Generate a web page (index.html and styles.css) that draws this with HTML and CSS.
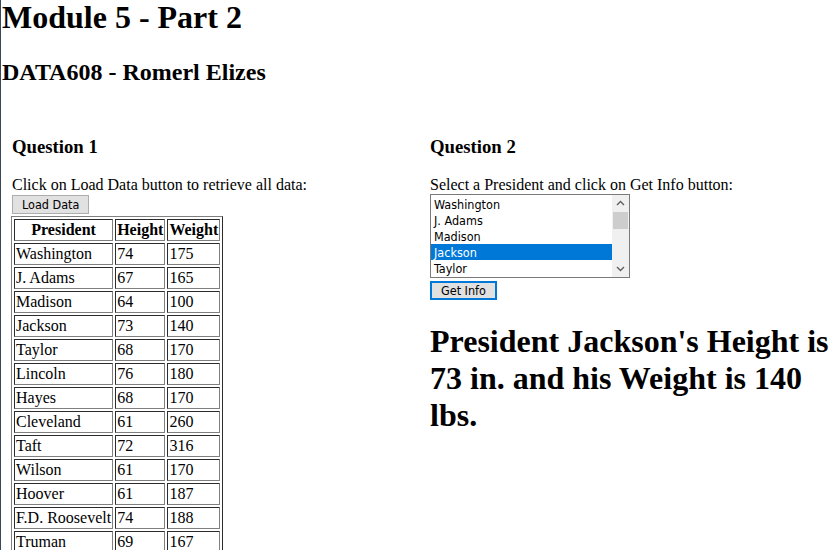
FILE: index.html
```html
<!DOCTYPE html>
<html lang="en">
<head>
<meta charset="utf-8">
<title>Module 5 - Part 2</title>
<link rel="stylesheet" href="styles.css">
</head>
<body>
<header class="page-header">
  <h1 class="title">Module 5 - Part 2</h1>
  <h2 class="subtitle">DATA608 - Romerl Elizes</h2>
</header>
<main class="row">
  <section class="col col-left">
    <h3 class="q-title">Question 1</h3>
    <div class="prompt">Click on Load Data button to retrieve all data:</div>
    <button class="btn">Load Data</button>
    <table class="data">
      <thead>
        <tr><th>President</th><th>Height</th><th>Weight</th></tr>
      </thead>
      <tbody>
        <tr><td>Washington</td><td>74</td><td>175</td></tr>
        <tr><td>J. Adams</td><td>67</td><td>165</td></tr>
        <tr><td>Madison</td><td>64</td><td>100</td></tr>
        <tr><td>Jackson</td><td>73</td><td>140</td></tr>
        <tr><td>Taylor</td><td>68</td><td>170</td></tr>
        <tr><td>Lincoln</td><td>76</td><td>180</td></tr>
        <tr><td>Hayes</td><td>68</td><td>170</td></tr>
        <tr><td>Cleveland</td><td>61</td><td>260</td></tr>
        <tr><td>Taft</td><td>72</td><td>316</td></tr>
        <tr><td>Wilson</td><td>61</td><td>170</td></tr>
        <tr><td>Hoover</td><td>61</td><td>187</td></tr>
        <tr><td>F.D. Roosevelt</td><td>74</td><td>188</td></tr>
        <tr><td>Truman</td><td>69</td><td>167</td></tr>
      </tbody>
    </table>
  </section>
  <section class="col col-right">
    <h3 class="q-title">Question 2</h3>
    <div class="prompt">Select a President and click on Get Info button:</div>
    <div class="listbox" role="listbox">
      <ul class="options">
        <li class="option">Washington</li>
        <li class="option">J. Adams</li>
        <li class="option">Madison</li>
        <li class="option selected">Jackson</li>
        <li class="option">Taylor</li>
      </ul>
      <div class="scrollbar">
        <span class="arrow"><svg width="17" height="17" viewBox="0 0 17 17"><path d="M5 10 L8.5 6.5 L12 10" fill="none" stroke="#606060" stroke-width="1.4"/></svg></span>
        <span class="track"><span class="thumb"></span></span>
        <span class="arrow"><svg width="17" height="17" viewBox="0 0 17 17"><path d="M5 7 L8.5 10.5 L12 7" fill="none" stroke="#606060" stroke-width="1.4"/></svg></span>
      </div>
    </div>
    <button class="btn btn-focused">Get Info</button>
    <h1 class="result">President Jackson's Height is 73 in. and his Weight is 140 lbs.</h1>
  </section>
</main>
</body>
</html>
```
FILE: styles.css
```css
html {
  overflow: hidden;
  background: #fff;
}

body {
  margin: 0;
  font-family: "Liberation Serif", "Times New Roman", serif;
  font-size: 16px;
  color: #000;
  box-shadow: inset 1px 0 0 #3a4858;
  min-height: 550px;
}

.page-header {
  padding-left: 2px;
}

.title {
  margin: -1px 0 0;
  font-size: 32px;
  line-height: 37px;
  font-weight: 700;
}

.subtitle {
  margin: 22px 0 0;
  font-size: 24px;
  line-height: 28px;
  font-weight: 700;
}

.row {
  display: grid;
  grid-template-columns: 418px 1fr;
  margin-top: 50px;
}

.col {
  min-width: 0;
}

.col-left {
  padding-left: 11px;
}

.col-right {
  padding-left: 12px;
}

.q-title {
  margin: 0 0 0 1px;
  font-size: 18.72px;
  line-height: 22px;
  font-weight: 700;
}

.col-right .q-title {
  margin-left: 0;
}

.prompt {
  margin-top: 18px;
  line-height: 18px;
}

.col-left .prompt {
  padding-left: 1px;
}

.btn {
  display: block;
  margin: 1px 0 0 1px;
  height: 19px;
  padding: 0 9px;
  border: 1px solid #adadad;
  background: #e1e1e1;
  font-family: "DejaVu Sans Condensed", "DejaVu Sans", Tahoma, sans-serif;
  font-stretch: condensed;
  font-size: 12.5px;
  line-height: 17px;
  color: #000;
}

.btn-focused {
  margin: 3px 0 0;
  padding: 0 9px;
  border: 2px solid #0078d7;
  line-height: 15px;
}

.data {
  margin-top: 2px;
  border-collapse: separate;
  border-spacing: 2px;
  border: 1px outset #808080;
}

.data th,
.data td {
  border: 1px inset #808080;
  padding: 1px;
  line-height: 18px;
  text-align: left;
  vertical-align: middle;
}

.data th {
  text-align: center;
  font-weight: 700;
}

.listbox {
  display: flex;
  width: 200px;
  height: 84px;
  box-sizing: border-box;
  border: 1px solid #7a7a7a;
  background: #fff;
  font-family: "DejaVu Sans Condensed", "DejaVu Sans", Tahoma, sans-serif;
  font-stretch: condensed;
  font-size: 12.5px;
}

.options {
  flex: 1;
  list-style: none;
  margin: 0;
  padding: 1px 0;
}

.option {
  height: 16px;
  line-height: 18px;
  overflow: hidden;
  padding-left: 3px;
  color: #000;
}

.option.selected {
  background: #0078d7;
  color: #fff;
}

.scrollbar {
  width: 17px;
  display: flex;
  flex-direction: column;
  background: #f0f0f0;
}

.arrow {
  display: block;
  height: 17px;
}

.arrow svg {
  display: block;
}

.track {
  flex: 1;
  display: block;
}

.thumb {
  display: block;
  height: 17px;
  margin: 0 1px;
  background: #cdcdcd;
}

.result {
  margin: 23px 0 0;
  font-size: 32px;
  line-height: 37px;
  font-weight: 700;
}
```
